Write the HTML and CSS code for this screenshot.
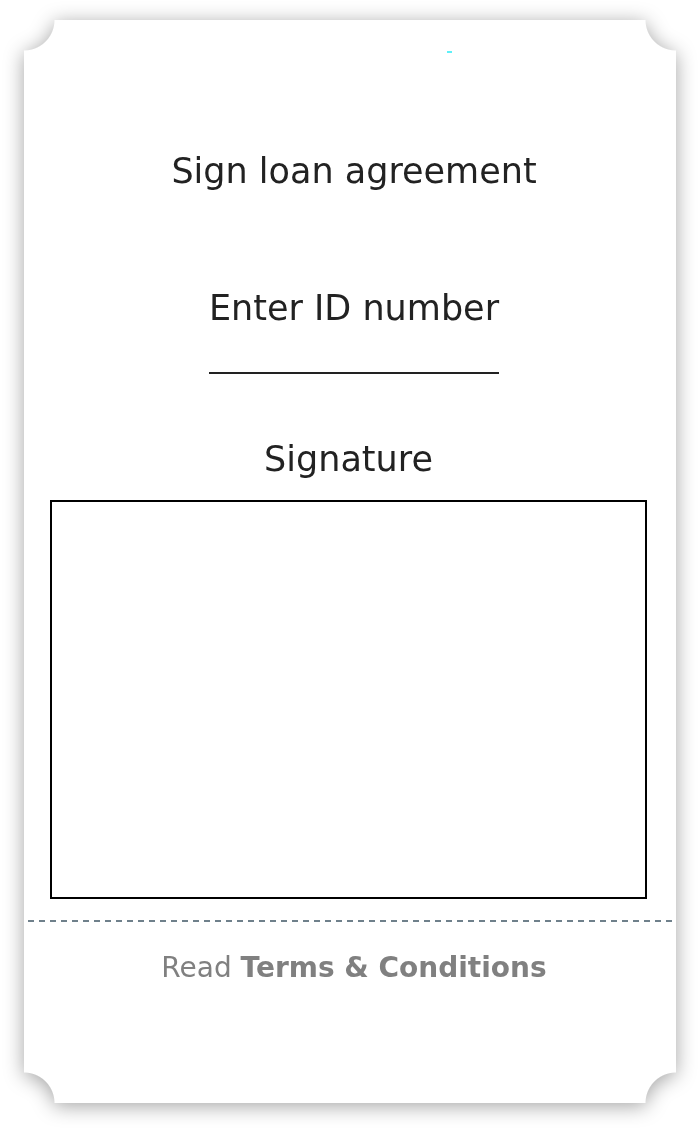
FILE: index.html
```html
<!DOCTYPE html>
<html lang="en">
<head>
    <meta charset="UTF-8">
    <meta name="viewport" content="width=device-width, initial-scale=1.0">
    <title>Sign loan agreement</title>
    <link rel="stylesheet" href="styles.css">
</head>
<body>
    <div class="ticket-shadow">
        <div class="ticket">
            <div class="caret"></div>

            <h1 class="title">Sign loan agreement</h1>

            <!-- ID field -->
            <div class="id-field">
                <label for="idNumber">Enter ID number</label>
                <input type="text" id="idNumber" name="idNumber" class="id-input">
            </div>

            <!-- Signature pad -->
            <div class="signature">
                <div class="signature-label">Signature</div>
                <div class="signature-pad"></div>
            </div>

            <div class="divider"></div>

            <div class="terms">
                Read <a href="#">Terms &amp; Conditions</a>
            </div>
        </div>
    </div>
</body>
</html>
```

FILE: styles.css
```css
* {
    margin: 0;
    padding: 0;
    box-sizing: border-box;
    font-family: 'DejaVu Sans', Verdana, sans-serif;
}

body {
    background-color: #ffffff;
    padding: 20px 24px 30px;
}

.ticket-shadow {
    width: 652px;
    filter: drop-shadow(0 3px 10px rgba(0, 0, 0, 0.36));
}

/* ticket shape: four quarter-circle notches */
.ticket {
    width: 652px;
    height: 1083px;
    padding-left: 8px;
    background-color: #fff;
    -webkit-mask:
        radial-gradient(circle at 0 0, transparent 30px, #000 31px) top left / 327px 542px no-repeat,
        radial-gradient(circle at 100% 0, transparent 30px, #000 31px) top right / 327px 542px no-repeat,
        radial-gradient(circle at 0 100%, transparent 30px, #000 31px) bottom left / 327px 542px no-repeat,
        radial-gradient(circle at 100% 100%, transparent 30px, #000 31px) bottom right / 327px 542px no-repeat;
    mask:
        radial-gradient(circle at 0 0, transparent 30px, #000 31px) top left / 327px 542px no-repeat,
        radial-gradient(circle at 100% 0, transparent 30px, #000 31px) top right / 327px 542px no-repeat,
        radial-gradient(circle at 0 100%, transparent 30px, #000 31px) bottom left / 327px 542px no-repeat,
        radial-gradient(circle at 100% 100%, transparent 30px, #000 31px) bottom right / 327px 542px no-repeat;
    display: flex;
    flex-direction: column;
    align-items: center;
}

.caret {
    width: 5px;
    height: 2px;
    background-color: #5ef0f8;
    margin: 31px 0 0 190px;
}

.title {
    font-size: 35px;
    font-weight: normal;
    color: #222;
    margin-top: 98px;
}

.id-field {
    display: flex;
    flex-direction: column;
    align-items: center;
    margin-top: 97px;
}

.id-field label {
    font-size: 35px;
    color: #222;
}

.id-input {
    width: 290px;
    height: 46px;
    border: none;
    border-bottom: 2px solid #222;
    outline: none;
    background: transparent;
}

.signature {
    display: flex;
    flex-direction: column;
    align-items: center;
    margin: 65px 11px 0 0;
}

.signature-label {
    font-size: 35px;
    color: #222;
    margin-bottom: 21px;
}

.signature-pad {
    width: 597px;
    height: 399px;
    border: 2px solid #000;
}

.divider {
    width: 644px;
    height: 2px;
    margin: 21px 8px 0 0;
    background: repeating-linear-gradient(to right, #6f808b 0 6px, transparent 6px 11px);
}

.terms {
    margin-top: 29px;
    font-size: 28px;
    color: #808080;
}

.terms a {
    color: #808080;
    font-weight: bold;
    text-decoration: none;
}
```
